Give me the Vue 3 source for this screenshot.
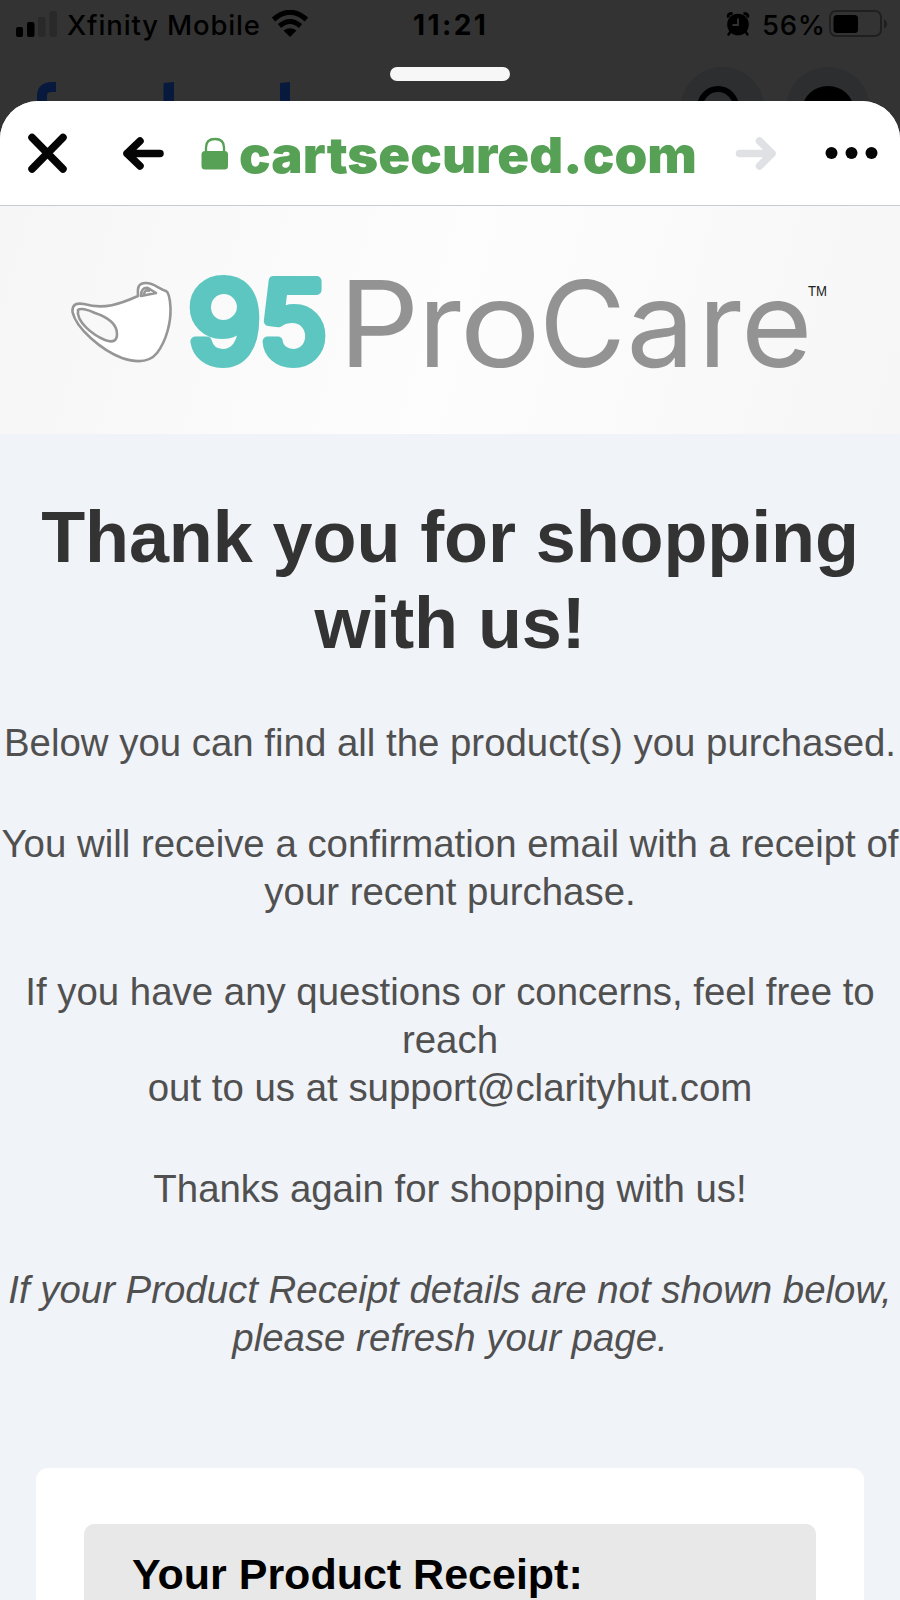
<template>
    <div class="screen">
        <!-- Dimmed app behind the sheet -->
        <div class="backdrop">
            <div class="status_bar">
                <svg class="signal" width="42" height="28" viewBox="0 0 42 28">
                    <rect x="0" y="17" width="7" height="10" rx="2" fill="#000" />
                    <rect x="11" y="12" width="7.5" height="15" rx="2" fill="#000" />
                    <rect x="22" y="7" width="7.5" height="20" rx="2" fill="#292929" />
                    <rect x="33.500" y="1" width="7.500" height="26" rx="2" fill="#292929" />
                </svg>
                <span class="carrier">Xfinity Mobile</span>
                <svg class="wifi" width="38" height="28" viewBox="0 0 38 28">
                    <path d="M2.500 9.500Q19-5 35.500 9.500M8.500 16Q19 7 29.500 16" fill="none" stroke="#000" stroke-width="5" />
                    <path d="M12.500 20.500Q19 16 25.500 20.500L19 27Z" fill="#000" />
                </svg>
                <span class="clock">11:21</span>
                <svg class="alarm" width="24" height="26" viewBox="0 0 24 26">
                    <path d="M2.500 6.500Q1 2.500 6.500 2.500M17.500 2.500Q23 2.500 21.500 6.500" fill="none" stroke="#000" stroke-width="3" />
                    <path d="M5 20L2.500 23.500M19 20L21.500 23.500" stroke="#000" stroke-width="2.500" stroke-linecap="round" />
                    <circle cx="12" cy="13.500" r="10.800" fill="#000" />
                    <path d="M12 7.500V14H6.500" fill="none" stroke="#333" stroke-width="1.800" />
                </svg>
                <span class="percent">56%</span>
                <svg class="battery" width="60" height="28" viewBox="0 0 60 28">
                    <rect x="1" y="1" width="51" height="25" rx="6" fill="none" stroke="#1f1f1f" stroke-width="2" />
                    <rect x="4.500" y="5" width="24.500" height="18" rx="3.500" fill="#000" />
                    <path d="M55 9.500Q58 11 58 14Q58 17 55 18.500Z" fill="#1f1f1f" />
                </svg>
            </div>
            <div class="grabber"></div>
            <svg class="behind" width="900" height="34" viewBox="0 0 900 34">
                <path d="M42 40V29Q42 20 52 20H56" fill="none" stroke="#071a3d" stroke-width="10" />
                <path d="M163.500 16L174 15V40H163.500ZM280 16L290 15V40H280Z" fill="#071a3d" />
                <circle cx="722.500" cy="42" r="42" fill="#2d2e30" />
                <circle cx="828" cy="42" r="42" fill="#2d2e30" />
                <circle cx="718" cy="40" r="18" fill="none" stroke="#000" stroke-width="6" />
                <ellipse cx="828" cy="41" rx="25" ry="22" fill="#000" />
            </svg>
        </div>

        <div class="sheet">
            <div class="toolbar">
                <svg width="900" height="104" viewBox="0 0 900 104">
                    <path d="M32 36.500L63 68M63 36.500L32 68" stroke="#050505" stroke-width="7.500" stroke-linecap="round" />
                    <path d="M160 52.500H127M140 40L127 52.500L140 65" fill="none" stroke="#050505" stroke-width="7.500" stroke-linecap="round" stroke-linejoin="round" />
                    <rect x="201.500" y="50" width="26.500" height="18.500" rx="3.500" fill="#56a156" />
                    <path d="M206 51V46.500Q206 38 215 38Q224 38 224 46.500V51" fill="none" stroke="#56a156" stroke-width="2.300" />
                    <text class="address" x="239" y="71.500" textLength="458" lengthAdjust="spacingAndGlyphs">cartsecured.com</text>
                    <path d="M739.500 52.500H772M759.500 40L772 52.500L759.500 65" fill="none" stroke="#dfe1e4" stroke-width="7.500" stroke-linecap="round" stroke-linejoin="round" />
                    <circle v-for="x in menuDots" :key="x" :cx="x" cy="52" r="6" fill="#050505" />
                </svg>
            </div>

            <div class="brand">
                <svg width="900" height="228" viewBox="0 206 900 228">
                    <g fill="none" stroke="#969696" stroke-width="2.600" stroke-linejoin="round">
                        <path d="M138 296C120 304 104 310 84 304C78 303 72 303 72.500 312C76 328 101 350 122 358C137 363 149 363 157 353C167 340 171 321 170.500 308C170 298 168 292 166 291C159 289 154 283 146 283C136 283 138 291 138 296Z" fill="#fff" />
                        <path d="M78 310C80 308 87 309 95 313C107 317 117 323 117 334C117 341 113 343 105 340C93 335 76 322 78 310Z" fill="#f8f8f8" />
                        <path d="M141 296Q141 287 148 288L156 293L141 296ZM144 295Q144 289 150 291" />
                    </g>
                    <text class="number" x="188" y="361.500" textLength="73" lengthAdjust="spacingAndGlyphs">9</text>
                    <text class="number" x="259" y="361.500" textLength="68" lengthAdjust="spacingAndGlyphs">5</text>
                    <text v-for="l in letters" :key="l.x" class="name" :transform="`translate(${l.x} 366.5) scale(${l.stretch} 1)`">{{ l.c }}</text>
                    <text class="tm" x="808" y="296" textLength="19" lengthAdjust="spacingAndGlyphs">TM</text>
                </svg>
            </div>

            <div class="content">
                <h1>Thank you for shopping<br />with us!</h1>
                <p>Below you can find all the product(s) you purchased.</p>
                <p>You will receive a confirmation email with a receipt of<br />your recent purchase.</p>
                <p>If you have any questions or concerns, feel free to<br />reach<br />out to us at support@clarityhut.com</p>
                <p>Thanks again for shopping with us!</p>
                <p class="note">If your Product Receipt details are not shown below,<br />please refresh your page.</p>

                <div class="card">
                    <div class="receipt_title">Your Product Receipt:</div>
                </div>
            </div>
        </div>
    </div>
</template>
<script setup>
const menuDots = [831.5, 851.5, 871.5];

// each letter of the brand name with its start position and horizontal stretch
const letters = [
    { c: "P", x: 338.5, stretch: 1.065 },
    { c: "r", x: 418, stretch: 1.0 },
    { c: "o", x: 459.5, stretch: 1.14 },
    { c: "C", x: 539, stretch: 1.0 },
    { c: "a", x: 626.5, stretch: 1.02 },
    { c: "r", x: 698, stretch: 1.0 },
    { c: "e", x: 741, stretch: 1.03 },
];
</script>
<style>
body {
    margin: 0;
    background: #333;
}
</style>
<style scoped>
.screen {
    width: 900px;
    height: 1600px;
    overflow: hidden;
    background: #333;
    font-family: "Liberation Sans", Arial, sans-serif;
}

svg {
    display: block;
    flex-shrink: 0;
}

.backdrop {
    height: 101px;
    overflow: hidden;
    color: #000;
    font-family: Inter, sans-serif;
}

.status_bar {
    height: 67px;
    padding: 10px 0 0 16px;
    box-sizing: border-box;
    display: flex;
    align-items: flex-start;
    font-size: 27.5px;
    line-height: 30px;
    white-space: nowrap;
}

.carrier {
    width: 204px;
    margin-left: 9px;
    font-weight: 500;
    letter-spacing: 0.85px;
}

.clock {
    width: 313px;
    margin-left: 104px;
    font-size: 28px;
    font-weight: 700;
    letter-spacing: 2.4px;
}

.percent {
    width: 67px;
    margin-left: 12px;
    font-weight: 500;
    letter-spacing: 0.7px;
}

.alarm {
    margin-top: 1px;
}

.grabber {
    width: 120px;
    height: 14px;
    margin: 0 auto;
    border-radius: 7px;
    background: #f7f7f7;
}

.behind {
    margin-top: -14px;
}

.sheet {
    height: 1499px;
    overflow: hidden;
    border-radius: 38px 38px 0 0;
    background: #f0f3f8;
}

.toolbar {
    height: 104px;
    background: #fff;
    border-bottom: 1px solid #c5ccd3;
}

.address {
    font-family: Inter, sans-serif;
    font-size: 50px;
    font-weight: 900;
    fill: #56a156;
}

.brand {
    height: 228px;
    background: linear-gradient(105deg, #f6f6f6, #fdfdfd 50%, #f6f6f6);
}

.number {
    font-family: Inter, sans-serif;
    font-size: 111px;
    font-weight: 400;
    fill: #5dc6c0;
    stroke: #5dc6c0;
    stroke-width: 10px;
    stroke-linejoin: round;
}

.name {
    font-family: Inter, sans-serif;
    font-size: 119px;
    font-weight: 400;
    fill: #939393;
}

.tm {
    font-size: 14px;
    fill: #222;
}

.content {
    padding-top: 60px;
    text-align: center;
    white-space: nowrap;
}

h1 {
    margin: 0 0 53px;
    color: #333;
    font-size: 72px;
    line-height: 86px;
    letter-spacing: -0.1px;
}

p {
    margin: 0 0 52.5px;
    color: #505050;
    font-size: 38.4px;
    line-height: 48.1px;
}

.note {
    font-style: italic;
}

.card {
    height: 200px;
    margin: 106px 36px 0;
    padding: 56px 48px 0;
    border-radius: 12px;
    background: #fff;
}

.receipt_title {
    height: 120px;
    padding: 25px 48px 0;
    border-radius: 10px;
    background: #e8e8e8;
    color: #000;
    font-size: 43px;
    font-weight: bold;
    line-height: 50px;
    text-align: left;
}
</style>
